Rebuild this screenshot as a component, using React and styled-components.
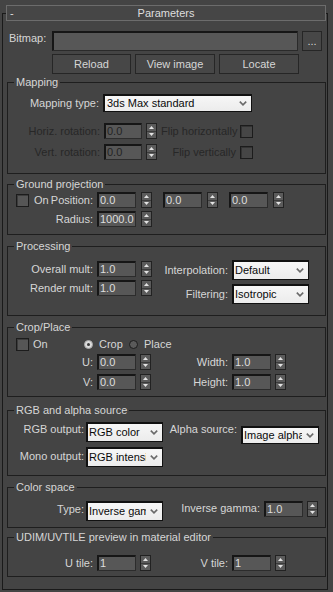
import React from 'react';
import styled, { createGlobalStyle } from 'styled-components';

const Global = createGlobalStyle`
  html, body { margin: 0; padding: 0; background: #444444; }
  body {
    font-family: "Liberation Sans", Arial, sans-serif;
    font-size: 11px;
    color: #d6d6d6;
  }
  * { box-sizing: border-box; }
`;

const Page = styled.div`
  width: 333px;
  height: 592px;
  background: #444444;
  padding-top: 13px;
  overflow: hidden;
`;

const Frame = styled.div`
  margin: 0 5px 0 2px;
  height: 577px;
  border: 1px solid #1a1a1a;
`;

const Header = styled.div`
  margin: -9px 1px 0 3px;
  height: 16px;
  border: 1px solid #6c6c6c;
  background: #464646;
  display: grid;
  grid-template-columns: 20px 1fr 20px;
  align-items: center;
  color: #dedede;
  line-height: 13px;
`;

const Collapse = styled.span`
  padding-left: 3px;
`;

const HeaderTitle = styled.span`
  text-align: center;
`;

const Row = styled.div`
  display: flex;
  align-items: ${(p) => (p.$top ? 'flex-start' : 'center')};
  height: ${(p) => p.$h}px;
  margin-top: ${(p) => p.$mt || 0}px;
  padding-left: ${(p) => p.$pl || 0}px;
`;

const Label = styled.span`
  display: block;
  flex: none;
  width: ${(p) => (p.$w ? `${p.$w}px` : 'auto')};
  margin-left: ${(p) => p.$ml || 0}px;
  margin-top: ${(p) => p.$mt || 0}px;
  text-align: ${(p) => (p.$left ? 'left' : 'right')};
  color: ${(p) => (p.$dim ? '#272727' : '#d6d6d6')};
  line-height: 13px;
  white-space: nowrap;
`;

const PathField = styled.div`
  flex: none;
  width: 246px;
  height: 20px;
  background: #575757;
  border: 1px solid #161616;
  border-right-color: #2a2a2a;
  border-bottom-color: #2a2a2a;
  box-shadow: inset 1px 1px 0 #161616;
`;

const Button = styled.div`
  flex: none;
  width: ${(p) => p.$w}px;
  height: 20px;
  margin-left: ${(p) => p.$ml || 0}px;
  border: 1px solid #262626;
  background: #474747;
  color: #d6d6d6;
  display: flex;
  align-items: ${(p) => (p.$dots ? 'flex-end' : 'center')};
  justify-content: center;
  line-height: 13px;
  padding-bottom: ${(p) => (p.$dots ? 2 : 0)}px;
`;

const Group = styled.div`
  margin: ${(p) => p.$mt}px 1px 0 4px;
  border: 1px solid #1e1e1e;
  padding: ${(p) => p.$pt}px 0 ${(p) => p.$pb}px 0;
`;

const Legend = styled.div`
  width: fit-content;
  height: 13px;
  line-height: 13px;
  margin: ${(p) => -7 - p.$pt}px 0 ${(p) => p.$pt - 6}px 6px;
  padding: 0 2px;
  background: #444444;
  color: #d6d6d6;
  white-space: nowrap;
`;

const NumField = styled.div`
  flex: none;
  width: ${(p) => p.$w || 39}px;
  height: ${(p) => p.$h || 16}px;
  margin-left: ${(p) => p.$ml || 0}px;
  margin-top: ${(p) => p.$mt || 0}px;
  background: #575757;
  border: 1px solid #161616;
  border-right-color: #2c2c2c;
  border-bottom-color: #2c2c2c;
  box-shadow: inset 1px 1px 0 #161616;
  color: ${(p) => (p.$dim ? '#242424' : '#dedede')};
  padding: 1px 0 0 2px;
  line-height: 12px;
  overflow: hidden;
  white-space: nowrap;
`;

const SpinBox = styled.div`
  flex: none;
  width: 11px;
  height: ${(p) => p.$h || 16}px;
  margin-left: ${(p) => p.$ml ?? 5}px;
  margin-top: ${(p) => p.$mt || 0}px;
  display: flex;
  flex-direction: column;
  border: 1px solid #222222;
  background: #5b5b5b;
`;

const SpinHalf = styled.div`
  flex: 1;
  display: flex;
  align-items: center;
  justify-content: center;
  & + & {
    border-top: 1px solid #3b3b3b;
  }
`;

const Select = styled.div`
  flex: none;
  display: flex;
  align-items: center;
  width: ${(p) => p.$w}px;
  height: ${(p) => p.$h || 20}px;
  margin-left: ${(p) => p.$ml || 0}px;
  margin-top: ${(p) => p.$mt || 0}px;
  background: linear-gradient(#f7f7f7, #ececec);
  border: 1px solid #111111;
  box-shadow: inset 1px 1px 0 #111111;
  color: #0a0a0a;
  padding: 1px 4px 0 ${(p) => p.$pl || 2}px;
`;

const SelectText = styled.span`
  flex: 1;
  min-width: 0;
  overflow: hidden;
  white-space: nowrap;
  line-height: 13px;
`;

const ChevronIcon = styled.svg`
  flex: none;
  margin-left: 4px;
`;

const Check = styled.span`
  flex: none;
  display: block;
  width: 13px;
  height: 13px;
  margin-left: ${(p) => p.$ml || 0}px;
  border: 1px solid #1c1c1c;
  background: ${(p) => (p.$dim ? '#464646' : '#565656')};
  box-shadow: inset 1px 1px 0 ${(p) => (p.$dim ? '#333333' : '#3c3c3c')};
`;

const Radio = styled.span`
  flex: none;
  display: flex;
  align-items: center;
  justify-content: center;
  width: 9px;
  height: 9px;
  margin-left: ${(p) => p.$ml || 0}px;
  border-radius: 50%;
  border: 1px solid ${(p) => (p.$on ? '#a8a8a8' : '#1c1c1c')};
  background: ${(p) => (p.$on ? '#dcdcdc' : '#5a5a5a')};
  &::after {
    content: '';
    width: 3px;
    height: 3px;
    border-radius: 50%;
    background: ${(p) => (p.$on ? '#3a3a3a' : 'transparent')};
  }
`;

const Col = styled.div`
  display: flex;
  flex-direction: column;
  margin-top: ${(p) => p.$mt || 0}px;
`;

const Columns = styled.div`
  display: flex;
  align-items: flex-start;
`;

const Arrow = ({ down }) => (
  <svg width="5" height="3" viewBox="0 0 5 3">
    <polygon points={down ? '0,0 5,0 2.5,3' : '0,3 5,3 2.5,0'} fill="#e4e4e4" />
  </svg>
);

const Spinner = (props) => (
  <SpinBox {...props}>
    <SpinHalf><Arrow /></SpinHalf>
    <SpinHalf><Arrow down /></SpinHalf>
  </SpinBox>
);

const Dropdown = ({ children, ...rest }) => (
  <Select {...rest}>
    <SelectText>{children}</SelectText>
    <ChevronIcon width="8" height="5" viewBox="0 0 8 5">
      <polyline points="0.8,0.6 4,3.8 7.2,0.6" fill="none" stroke="#6a6a6a" strokeWidth="1.6" />
    </ChevronIcon>
  </Select>
);

const GroupBox = ({ title, mt, pt, pb, children }) => (
  <Group $mt={mt} $pt={pt} $pb={pb}>
    <Legend $pt={pt}>{title}</Legend>
    {children}
  </Group>
);

export default function App() {
  return (
    <>
      <Global />
      <Page>
        <Frame>
          <Header>
            <Collapse>-</Collapse>
            <HeaderTitle>Parameters</HeaderTitle>
            <span />
          </Header>

          <Row $h={20} $mt={10} $pl={6} $top>
            <Label $w={43} $left $mt={1}>Bitmap:</Label>
            <PathField />
            <Button $w={20} $ml={4} $dots>...</Button>
          </Row>

          <Row $h={20} $mt={3} $pl={49}>
            <Button $w={79}>Reload</Button>
            <Button $w={80} $ml={4}>View image</Button>
            <Button $w={80} $ml={4}>Locate</Button>
          </Row>

          <GroupBox title="Mapping" mt={8} pt={11} pb={13}>
            <Row $h={18}>
              <Label $w={91}>Mapping type:</Label>
              <Dropdown $w={149} $h={18} $ml={4} $pl={3}>3ds Max standard</Dropdown>
            </Row>
            <Row $h={16} $mt={11}>
              <Label $w={92} $dim>Horiz. rotation:</Label>
              <NumField $w={38} $ml={4} $dim>0.0</NumField>
              <Spinner $ml={4} />
              <Label $w={75} $ml={4} $dim>Flip horizontally</Label>
              <Check $ml={4} $dim />
            </Row>
            <Row $h={16} $mt={5}>
              <Label $w={92} $dim>Vert. rotation:</Label>
              <NumField $w={38} $ml={4} $dim>0.0</NumField>
              <Spinner $ml={4} />
              <Label $w={75} $ml={4} $dim>Flip vertically</Label>
              <Check $ml={4} $dim />
            </Row>
          </GroupBox>

          <GroupBox title="Ground projection" mt={10} pt={7} pb={7}>
            <Row $h={16}>
              <Check $ml={8} />
              <Label $w={16} $ml={5} $left>On</Label>
              <Label $w={43}>Position:</Label>
              <NumField $ml={4}>0.0</NumField>
              <Spinner />
              <NumField $ml={11}>0.0</NumField>
              <Spinner />
              <NumField $ml={11}>0.0</NumField>
              <Spinner />
            </Row>
            <Row $h={16} $mt={3}>
              <Label $w={85}>Radius:</Label>
              <NumField $ml={4}>1000.0</NumField>
              <Spinner />
            </Row>
          </GroupBox>

          <GroupBox title="Processing" mt={11} pt={13} pb={11}>
            <Columns>
              <Col $mt={1}>
                <Row $h={16}>
                  <Label $w={85}>Overall mult:</Label>
                  <NumField $ml={4}>1.0</NumField>
                  <Spinner />
                </Row>
                <Row $h={16} $mt={3}>
                  <Label $w={85}>Render mult:</Label>
                  <NumField $ml={4}>1.0</NumField>
                  <Spinner />
                </Row>
              </Col>
              <Col>
                <Row $h={20}>
                  <Label $w={76}>Interpolation:</Label>
                  <Dropdown $w={77} $ml={4}>Default</Dropdown>
                </Row>
                <Row $h={20} $mt={4}>
                  <Label $w={76}>Filtering:</Label>
                  <Dropdown $w={77} $ml={4}>Isotropic</Dropdown>
                </Row>
              </Col>
            </Columns>
          </GroupBox>

          <GroupBox title="Crop/Place" mt={11} pt={9} pb={6}>
            <Row $h={14}>
              <Check $ml={8} />
              <Label $w={16} $ml={4} $left>On</Label>
              <Radio $ml={35} $on />
              <Label $w={24} $ml={6} $left>Crop</Label>
              <Radio $ml={6} />
              <Label $ml={6} $left>Place</Label>
            </Row>
            <Row $h={16} $mt={3}>
              <Label $w={85}>U:</Label>
              <NumField $ml={4}>0.0</NumField>
              <Spinner $ml={4} />
              <Label $w={77}>Width:</Label>
              <NumField $ml={4}>1.0</NumField>
              <Spinner $ml={4} />
            </Row>
            <Row $h={16} $mt={4}>
              <Label $w={85}>V:</Label>
              <NumField $ml={4}>0.0</NumField>
              <Spinner $ml={4} />
              <Label $w={77}>Height:</Label>
              <NumField $ml={4}>1.0</NumField>
              <Spinner $ml={4} />
            </Row>
          </GroupBox>

          <GroupBox title="RGB and alpha source" mt={13} pt={11} pb={8}>
            <Row $h={21} $top>
              <Label $w={76} $mt={1}>RGB output:</Label>
              <Dropdown $w={77} $ml={2}>RGB color</Dropdown>
              <Label $w={74} $mt={1}>Alpha source:</Label>
              <Dropdown $w={78} $h={18} $ml={4} $mt={4}>Image alpha</Dropdown>
            </Row>
            <Row $h={20} $mt={4} $top>
              <Label $w={76} $mt={3}>Mono output:</Label>
              <Dropdown $w={77} $ml={2}>RGB intensity</Dropdown>
            </Row>
          </GroupBox>

          <GroupBox title="Color space" mt={11} pt={13} pb={6}>
            <Row $h={20} $top>
              <Label $w={76} $mt={2}>Type:</Label>
              <Dropdown $w={77} $ml={2}>Inverse gamma</Dropdown>
              <Label $w={97} $mt={1}>Inverse gamma:</Label>
              <NumField $ml={4}>1.0</NumField>
              <Spinner $ml={4} />
            </Row>
          </GroupBox>

          <GroupBox title="UDIM/UVTILE preview in material editor" mt={9} pt={17} pb={5}>
            <Row $h={16}>
              <Label $w={85}>U tile:</Label>
              <NumField $ml={4}>1</NumField>
              <Spinner $ml={4} />
              <Label $w={77}>V tile:</Label>
              <NumField $ml={4}>1</NumField>
              <Spinner $ml={4} />
            </Row>
          </GroupBox>
        </Frame>
      </Page>
    </>
  );
}
